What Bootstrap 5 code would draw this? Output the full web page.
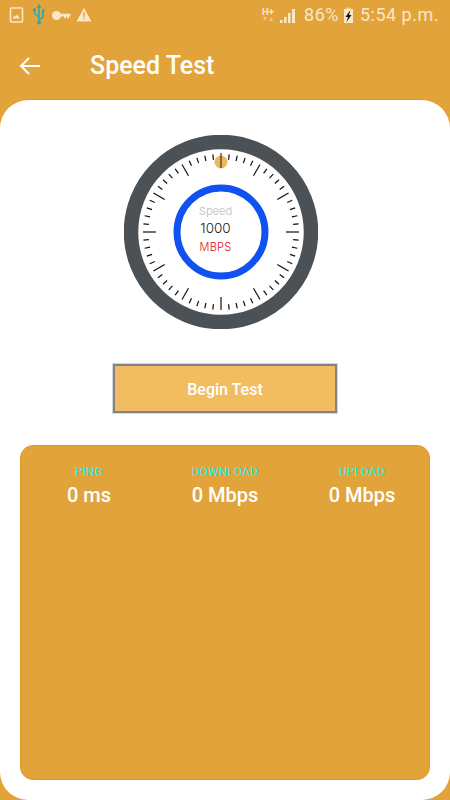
<!DOCTYPE html>
<html lang="en">
<head>
<meta charset="utf-8">
<title>Speed Test</title>
<link href="https://cdn.jsdelivr.net/npm/bootstrap@5.3.0/dist/css/bootstrap.min.css" rel="stylesheet">
<style>
html,body{height:100%}
body{width:450px;height:800px;overflow:hidden;background:#e3a33b;font-family:Roboto,"Liberation Sans",sans-serif;color:#fff}
.app-status{height:30px;padding:0 11px 0 9px;color:#fae6c8}
.app-status .pct{font-size:18px;line-height:30px;letter-spacing:.5px}
.app-status .clock{font-size:18px;line-height:30px;letter-spacing:.5px;margin-left:6px}
.app-bar{height:70px;padding:1px 0 0 19px}
.app-bar h1{font-size:25px;font-weight:500;margin:0 0 0 49px;line-height:70px}
.app-sheet{height:700px;background:#fff;border-radius:28px;padding:35px 20px 20px;box-shadow:0 -1px 0 #e09a22}
.gauge-wrap{height:194px;padding-right:8px}
.begin-btn{width:224px;height:49px;margin-top:35px;padding-top:8px;border-radius:0;border:2px solid #808489;outline:1px solid #d8d8d8;background:#f2bd60;color:#fff;font-size:16px;font-weight:500}
.begin-btn:hover{background:#f2bd60;color:#fff;border-color:#808489}
.stats-panel{height:335px;margin-top:32px;background:#e3a33b;border:1px solid #e09a22;border-radius:13px;padding-top:19px}
.stat-label{font-size:12px;line-height:15px;color:#10f4f4;font-weight:400;letter-spacing:.15px}
.stat-val{font-size:20px;line-height:28px;font-weight:500;margin-top:1px}
.stat-a,.stat-b{width:136px}
.stat-c{width:136px;padding-left:2px}
</style>
</head>
<body>
<div class="d-flex flex-column">
  <div class="app-status d-flex align-items-center">
    <svg width="84" height="30" viewBox="0 0 84 30">
      <rect x="1.500" y="8" width="12" height="14" rx="1" fill="none" stroke="#fae6c8" stroke-width="1.600"/>
      <path d="M3.500 18.500l2.200-3 1 1 1.300-2 1.300 1.600 1.500 2.400z" fill="#fae6c8"/>
      <path d="M30 5v19M30 17l-4.500-3.500V10M30 20l4-3v-5" stroke="#25a9b8" stroke-width="1.500" fill="none"/>
      <path d="M27.500 8l2.500-4 2.500 4z" fill="#25a9b8"/>
      <circle cx="30" cy="22.500" r="2" fill="#25a9b8"/>
      <rect x="24" y="8.500" width="3" height="2.500" fill="#25a9b8"/>
      <rect x="33" y="9.500" width="2.500" height="2.500" fill="#25a9b8"/>
      <circle cx="47.500" cy="15.500" r="4.500" fill="#fae6c8"/>
      <path d="M50 13.800h11.500v2.700h-1.500v1.700h-2v-1.700h-1v1.700h-2v-1.700H50z" fill="#fae6c8"/>
      <path d="M75 8l7.500 13.500h-15z" fill="#fae6c8"/>
      <path d="M74.300 12h1.400v5h-1.400zM74.300 18h1.400v1.500h-1.400z" fill="#e3a33b"/>
    </svg>
    <div class="ms-auto d-flex align-items-center">
      <svg width="34" height="30" viewBox="0 0 34 30">
        <text x="0" y="15" font-family="Roboto,sans-serif" font-size="9.500" font-weight="700" fill="#fae6c8">H+</text>
        <path d="M1 17h4l-2 4zM7 21l2-4 2 4z" fill="#f0c88a"/>
        <path d="M18 23h2.500v-3H18zM22 23h2.500v-6H22zM26 23h2.500v-10H26zM30 23h3V9h-3z" fill="#fae6c8"/>
      </svg>
      <span class="pct ms-2">86%</span>
      <svg class="ms-1" width="11" height="30" viewBox="0 0 11 30">
        <rect x="3" y="7.500" width="5" height="2" fill="#f0c88a"/>
        <rect x="1" y="9" width="9" height="14" fill="#fae6c8"/>
        <path d="M7.500 10L2.500 17H5L3.500 22 8.500 15H6z" fill="#111"/>
      </svg>
      <span class="clock">5:54 p.m.</span>
    </div>
  </div>

  <div class="app-bar d-flex align-items-center">
    <svg width="22" height="20" viewBox="0 0 22 20"><path d="M21 10H2M10 2l-8 8 8 8" fill="none" stroke="#fff" stroke-width="2"/></svg>
    <h1>Speed Test</h1>
  </div>

  <div class="app-sheet d-flex flex-column align-items-center">
    <div class="gauge-wrap">
      <svg id="gauge" width="194" height="194" viewBox="-97 -97 194 194">
        <circle r="90" fill="#fff" stroke="#4b5154" stroke-width="14.500"/>
        <g id="ticks" stroke="#111"></g>
        <circle cy="-70" r="6.500" fill="#f0b65a"/>
        <line y1="-79" y2="-64" stroke="#333" stroke-width="1.200"/>
        <circle r="44" fill="#fff" stroke="#0f52f0" stroke-width="7"/>
        <text x="-5.500" y="-17.500" text-anchor="middle" font-family="Inter,sans-serif" font-size="11" fill="#c9c9c9">Speed</text>
        <text x="-5.500" y="1" text-anchor="middle" font-family="Inter,sans-serif" font-size="13.500" font-weight="300" fill="#222">1000</text>
        <text x="-5.500" y="18.500" text-anchor="middle" font-family="Inter,sans-serif" font-size="11" font-weight="300" letter-spacing=".3" fill="#e01010">MBPS</text>
      </svg>
    </div>
    <button type="button" class="btn begin-btn">Begin Test</button>
    <div class="stats-panel w-100 align-self-stretch">
      <div class="d-flex justify-content-center text-center">
        <div class="stat-a"><div class="stat-label">PING</div><div class="stat-val">0 ms</div></div>
        <div class="stat-b"><div class="stat-label">DOWNLOAD</div><div class="stat-val">0 Mbps</div></div>
        <div class="stat-c"><div class="stat-label">UPLOAD</div><div class="stat-val">0 Mbps</div></div>
      </div>
    </div>
  </div>
</div>
<script>
var g=document.getElementById('ticks'),s='';
for(var i=1;i<60;i++){
  var m=i%5===0,inner=m?65:72.5,outer=78,a=i*6*Math.PI/180,sn=Math.sin(a),c=Math.cos(a);
  s+='<line x1="'+(inner*sn).toFixed(2)+'" y1="'+(-inner*c).toFixed(2)+'" x2="'+(outer*sn).toFixed(2)+'" y2="'+(-outer*c).toFixed(2)+'" stroke-width="1.200"/>';
}
g.innerHTML=s;
</script>
<script src="https://cdn.jsdelivr.net/npm/bootstrap@5.3.0/dist/js/bootstrap.bundle.min.js"></script>
</body>
</html>
